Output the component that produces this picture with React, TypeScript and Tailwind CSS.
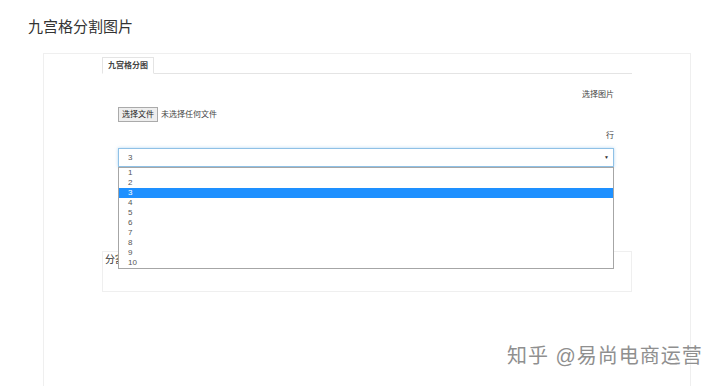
import * as React from "react"

const options = ["1", "2", "3", "4", "5", "6", "7", "8", "9", "10"]

export default function App() {
    return (
        <main
            className="relative h-[386px] w-[720px] overflow-hidden bg-white text-[#333]"
            style={{ fontFamily: '"Liberation Sans", "Noto Sans CJK SC", sans-serif' }}
        >
            {/* Page title */}
            <h1 className="pl-[28px] pt-[18px] text-[15px] leading-[18px] text-[#333]">九宫格分割图片</h1>

            {/* Outer panel */}
            <div className="ml-[43px] mt-[17px] h-[340px] w-[648px] border border-[#efefef] pt-[3px]">
                <div className="ml-[58px] w-[530px]">
                    {/* Tabs */}
                    <div className="flex border-b border-[#e4e4e4]">
                        <div className="-mb-px h-[17px] border border-b-white border-[#e4e4e4] bg-white px-[5px] text-[8px] font-bold leading-[15px] text-[#444]">
                            九宫格分图
                        </div>
                    </div>

                    {/* Form */}
                    <div className="pl-[16px] pr-[18px]">
                        <div className="pt-[16px] text-right text-[8px] leading-[10px] text-[#444]">选择图片</div>
                        <div className="mt-[7px] flex items-center gap-[3px] text-[8px] text-[#444]">
                            <button className="h-[15px] border border-[#aaa] bg-[#eee] px-[3px] text-[8px] leading-[13px] text-[#222]">
                                选择文件
                            </button>
                            <span>未选择任何文件</span>
                        </div>
                        <div className="pt-[9px] text-right text-[8px] leading-[10px] text-[#444]">行</div>

                        {/* Select with open list */}
                        <div className="relative mt-[7px]">
                            <div className="flex h-[19px] items-center justify-between border border-[#8fc1e6] bg-white pl-[9px] pr-[4px] text-[8px] text-[#555] shadow-[0_0_3px_rgba(102,175,233,0.5)]">
                                <span>3</span>
                                <span className="text-[5px] text-[#333]">▼</span>
                            </div>
                            <ul className="absolute left-0 top-[19px] z-10 w-full border border-[#a6a6a6] bg-white text-[8px] leading-[10px] text-[#555]">
                                {options.map((o) => (
                                    <li
                                        key={o}
                                        className={o === "3" ? "h-[10px] bg-[#1e90ff] pl-[9px] text-white" : "h-[10px] pl-[9px]"}
                                    >
                                        {o}
                                    </li>
                                ))}
                            </ul>
                        </div>
                    </div>

                    {/* Result box, covered by the list */}
                    <div className="mt-[84px] h-[41px] border border-[#efefef] pl-[2px] pt-[2px] text-[10px] leading-[12px] text-[#333]">
                        分割
                    </div>
                </div>
            </div>

            {/* Watermark */}
            <div
                className="absolute left-[507px] top-[343px] text-[20px] leading-[26px] tracking-[1px] text-[#8f8f8f]"
                style={{ textShadow: "0 0 2px #fff, 0 0 1px #fff" }}
            >
                知乎 @易尚电商运营
            </div>
        </main>
    )
}
